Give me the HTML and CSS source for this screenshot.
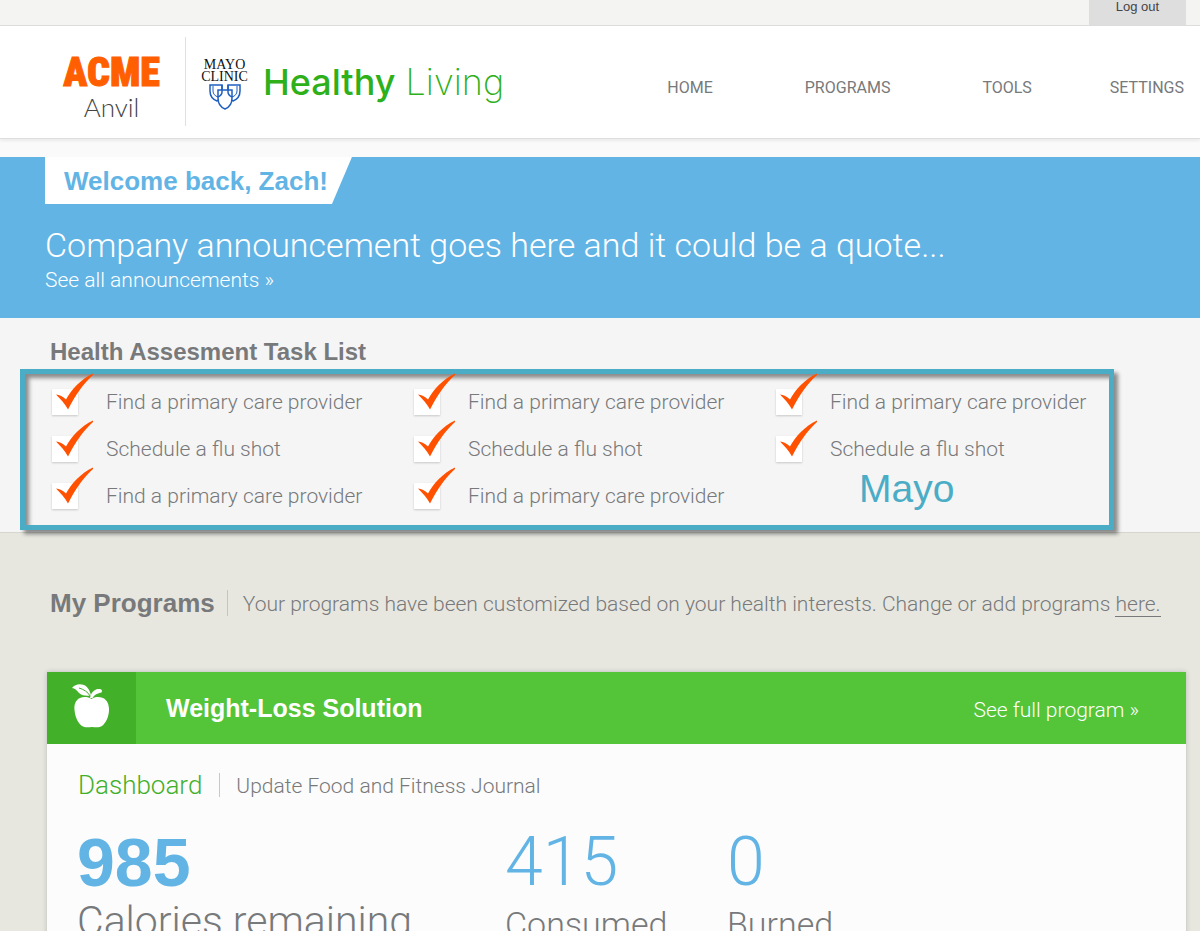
FILE: index.html
```html
<!DOCTYPE html>
<html lang="en">
<head>
<meta charset="utf-8">
<meta name="viewport" content="width=device-width, initial-scale=1">
<title>Healthy Living</title>
<link rel="stylesheet" href="styles.css">
</head>
<body>
<svg class="defs" width="0" height="0" aria-hidden="true">
  <symbol id="tick" viewBox="0 0 38 37">
    <path d="M0 21.500C3.500 22 7 23.500 10 26.500C15 17 25 6 37 0.500V2C28 10 19.500 22 12 36.500C9 31 5 26.500 0 21.500Z"/>
  </symbol>
</svg>

<div class="topbar"><button class="logout" type="button">Log out</button></div>

<header class="header">
  <div class="brand">
    <a class="acme" href="#"><span class="acme-name">ACME</span><span class="acme-sub">Anvil</span></a>
    <a class="mayo" href="#">
      <span>MAYO</span><span>CLINIC</span>
      <svg class="shields" viewBox="0 0 32 26" aria-hidden="true">
        <g fill="#fff" stroke="#1f5fc0" stroke-width="1.500">
          <path d="M1 1H13V8C13 12 11 15 8 17C3 15 1 12 1 7Z"/>
          <path d="M19 1H31V7C31 12 29 15 24 17C21 15 19 12 19 8Z"/>
          <path d="M4 2V7C4 10 6 12 9 13M28 2V7C28 10 26 12 23 13" fill="none" stroke-width="1"/>
          <path d="M9 6H23V14C23 19 21 23 16 25C11 23 9 19 9 14Z"/>
          <path d="M13 1V8Q13 11 9 13M19 1V8Q19 11 23 13" fill="none"/>
        </g>
      </svg>
    </a>
    <a class="product" href="#"><span class="product-strong">Healthy</span> Living</a>
  </div>
  <nav class="nav">
    <a href="#">HOME</a><a href="#">PROGRAMS</a><a href="#">TOOLS</a><a href="#">SETTINGS</a>
  </nav>
</header>

<section class="banner">
  <h1 class="welcome">Welcome back, Zach!</h1>
  <p class="announcement">Company announcement goes here and it could be a quote...</p>
  <a class="all-news" href="#">See all announcements »</a>
</section>

<section class="tasks">
  <h2 class="tasks-title">Health Assesment Task List</h2>
  <div class="task-panel">
    <ul class="task-col">
      <li><label class="task"><span class="box"><input type="checkbox" checked><svg><use href="#tick"/></svg></span>Find a primary care provider</label></li>
      <li><label class="task"><span class="box"><input type="checkbox" checked><svg><use href="#tick"/></svg></span>Schedule a flu shot</label></li>
      <li><label class="task"><span class="box"><input type="checkbox" checked><svg><use href="#tick"/></svg></span>Find a primary care provider</label></li>
    </ul>
    <ul class="task-col">
      <li><label class="task"><span class="box"><input type="checkbox" checked><svg><use href="#tick"/></svg></span>Find a primary care provider</label></li>
      <li><label class="task"><span class="box"><input type="checkbox" checked><svg><use href="#tick"/></svg></span>Schedule a flu shot</label></li>
      <li><label class="task"><span class="box"><input type="checkbox" checked><svg><use href="#tick"/></svg></span>Find a primary care provider</label></li>
    </ul>
    <div>
      <ul class="task-col">
        <li><label class="task"><span class="box"><input type="checkbox" checked><svg><use href="#tick"/></svg></span>Find a primary care provider</label></li>
        <li><label class="task"><span class="box"><input type="checkbox" checked><svg><use href="#tick"/></svg></span>Schedule a flu shot</label></li>
      </ul>
      <p class="source">Mayo</p>
    </div>
  </div>
</section>

<main class="programs">
  <div class="programs-head">
    <h2 class="programs-title">My Programs</h2>
    <p class="programs-note">Your programs have been customized based on your health interests. Change or add programs <a href="#">here.</a></p>
  </div>
  <article class="card">
    <header class="card-head">
      <div class="card-icon">
        <svg viewBox="0 0 38 44" aria-hidden="true">
          <path fill="#fff" d="M19.500 15C16 12.500 11 12.500 8 14C3.500 16 2 20.500 2.500 26C3 33 6 39 10 42C13 44 17 43 20 43C23 43 27 44 30 42C34 39 37 32 37 26C37 20 35 16 31 14C27 12.500 23 12.500 19.500 15Z"/>
          <path fill="#fff" d="M0 4C3 0 8 -0.500 12 1C16 3 18 7 19 11.500C15 12 10 12 7 9C4.500 6 3 4.500 0 4Z"/>
          <path fill="none" stroke="#43b02a" stroke-width="1" d="M7 4C12 5.500 16 8 18 12"/>
          <path fill="#fff" d="M18 14C19 9 22 5.500 26 5C29 4.500 31 6 29.500 8.500C26 9 22 11 20.500 14Z"/>
        </svg>
      </div>
      <h3 class="card-title">Weight-Loss Solution</h3>
      <a class="card-link" href="#">See full program »</a>
    </header>
    <nav class="tabs"><a class="tab-current" href="#">Dashboard</a><a class="tab" href="#">Update Food and Fitness Journal</a></nav>
    <div class="stats">
      <div class="stat stat-main"><strong class="num">985</strong><span class="label-main">Calories remaining</span></div>
      <div class="stat"><span class="num">415</span><span class="label">Consumed</span></div>
      <div class="stat"><span class="num">0</span><span class="label">Burned</span></div>
    </div>
  </article>
</main>
</body>
</html>
```
FILE: styles.css
```css
* { box-sizing: border-box; }
body {
  margin: 0;
  background: #e7e7e0;
  color: #77797b;
  font: 300 21px/24px Roboto, "Liberation Sans", sans-serif;
}
h1, h2, h3, p, ul { margin: 0; padding: 0; }
ul { list-style: none; }
a { color: inherit; text-decoration: none; }
.defs { position: absolute; }

.topbar {
  display: flex;
  justify-content: flex-end;
  height: 26px;
  padding-right: 14px;
  background: #f4f4f2;
  border-bottom: 1px solid #dcdcda;
}
.logout {
  width: 97px;
  padding: 0 0 12px;
  border: 0;
  background: #dedede;
  color: #444;
  font: 400 13px/13px "Liberation Sans", sans-serif;
}

.header {
  position: relative;
  display: flex;
  justify-content: space-between;
  height: 113px;
  padding: 11px 16px 12px 66px;
  background: #fff;
  border-bottom: 1px solid #dedede;
  box-shadow: 0 2px 3px #00000010;
}
.brand { display: flex; }
.acme {
  display: flex;
  flex-direction: column;
  align-items: center;
  width: 120px;
  padding: 12px 28px 0 0;
  border-right: 1px solid #e0e0dc;
}
.acme-name {
  color: #ff5f00;
  font: 900 40px/48px Impact, "Roboto Condensed", Roboto, sans-serif;
  -webkit-text-stroke: 1px #ff5f00;
}
.acme-sub { color: #444; font: 300 26px/20px Lato, sans-serif; }
.mayo {
  display: flex;
  flex-direction: column;
  align-items: center;
  width: 77px;
  padding-top: 22px;
  color: #111;
  font: 400 14px/12px "Liberation Serif", serif;
}
.shields { width: 32px; height: 26px; margin-top: 1px; }
.product { padding-top: 22px; color: #2eb01a; font: 200 36px/46px Inter, sans-serif; }
.product-strong { font-weight: 500; }
.nav { display: flex; gap: 78px; padding-top: 41px; font: 400 16px/20px Roboto, sans-serif; }
.nav a:nth-child(-n+2) { padding-right: 14px; }

.banner {
  padding: 0 45px 24px;
  border-top: 18px solid #fafafa;
  background: #62b4e5;
  color: #fff;
}
.welcome {
  width: fit-content;
  height: 47px;
  padding: 0 24px 0 19px;
  background: #fff;
  clip-path: polygon(0 0, 100% 0, calc(100% - 20px) 100%, 0 100%);
  color: #62b4e5;
  font: 700 26px/48px "Liberation Sans", sans-serif;
}
.announcement { padding-top: 19px; font-size: 34px; line-height: 44px; }
.all-news { display: block; line-height: 27px; }

.tasks {
  padding: 22px 86px 2px 20px;
  background: #f5f5f5;
  border-bottom: 1px solid #d6d6d0;
}
.tasks-title { padding-left: 30px; font: 700 24px/24px "Liberation Sans", sans-serif; }
.task-panel {
  display: grid;
  grid-template-columns: repeat(3, 1fr);
  column-gap: 29px;
  margin-top: 5px;
  padding: 4px 0 6px 27px;
  border: 5px solid #4bacc6;
  box-shadow: 4px 4px 4px #00000070, inset 4px 4px 4px #00000070;
}
.task { display: flex; align-items: center; gap: 28px; height: 47px; }
.box { position: relative; width: 26px; height: 26px; }
.box input {
  appearance: none;
  display: block;
  width: 26px;
  height: 26px;
  margin: 0;
  background: #fff;
  box-shadow: 0 1px 2px #00000030;
}
.box svg { position: absolute; left: 4px; top: -16px; width: 38px; height: 37px; fill: #ff5100; }
.source { padding-left: 83px; color: #4bacc6; font: 400 39px/34px "Liberation Sans", sans-serif; }

.programs { padding: 56px 14px 0 47px; }
.programs-head { display: flex; align-items: center; padding-left: 3px; }
.programs-title {
  padding-right: 12px;
  border-right: 1px solid #c4c4c0;
  font: 700 26px/26px "Liberation Sans", sans-serif;
}
.programs-note { padding: 3px 0 0 15px; }
.programs-note a { border-bottom: 1px solid #77797b; }
.card {
  margin-top: 56px;
  background: #fcfcfc;
  box-shadow: 0 0 5px #00000030;
}
.card-head { display: flex; align-items: center; padding-right: 47px; background: #54c439; color: #fff; }
.card-icon { width: 89px; height: 72px; padding: 12px 0 0 25px; background: #43b02a; }
.card-icon svg { display: block; width: 38px; height: 44px; }
.card-title { flex: 1; padding-left: 30px; font: 700 25px/30px "Liberation Sans", sans-serif; }
.card-link { padding-top: 3px; }
.tabs { display: flex; align-items: center; padding: 27px 31px 0; }
.tab-current { padding-right: 17px; border-right: 1px solid #c8c8c8; color: #43b02a; font-size: 26px; }
.tab { padding: 3px 0 0 16px; }
.stats { display: flex; padding: 29px 30px 40px; }
.stat { display: flex; flex-direction: column; width: 222px; }
.stat-main { width: 428px; }
.num { color: #62b4e5; font-size: 68px; line-height: 70px; font-weight: 300; }
.stat-main .num { font: 700 68px/70px "Liberation Sans", sans-serif; }
.label-main { font-size: 41px; line-height: 48px; }
.label { padding-top: 3px; font-size: 34px; line-height: 48px; }
```
